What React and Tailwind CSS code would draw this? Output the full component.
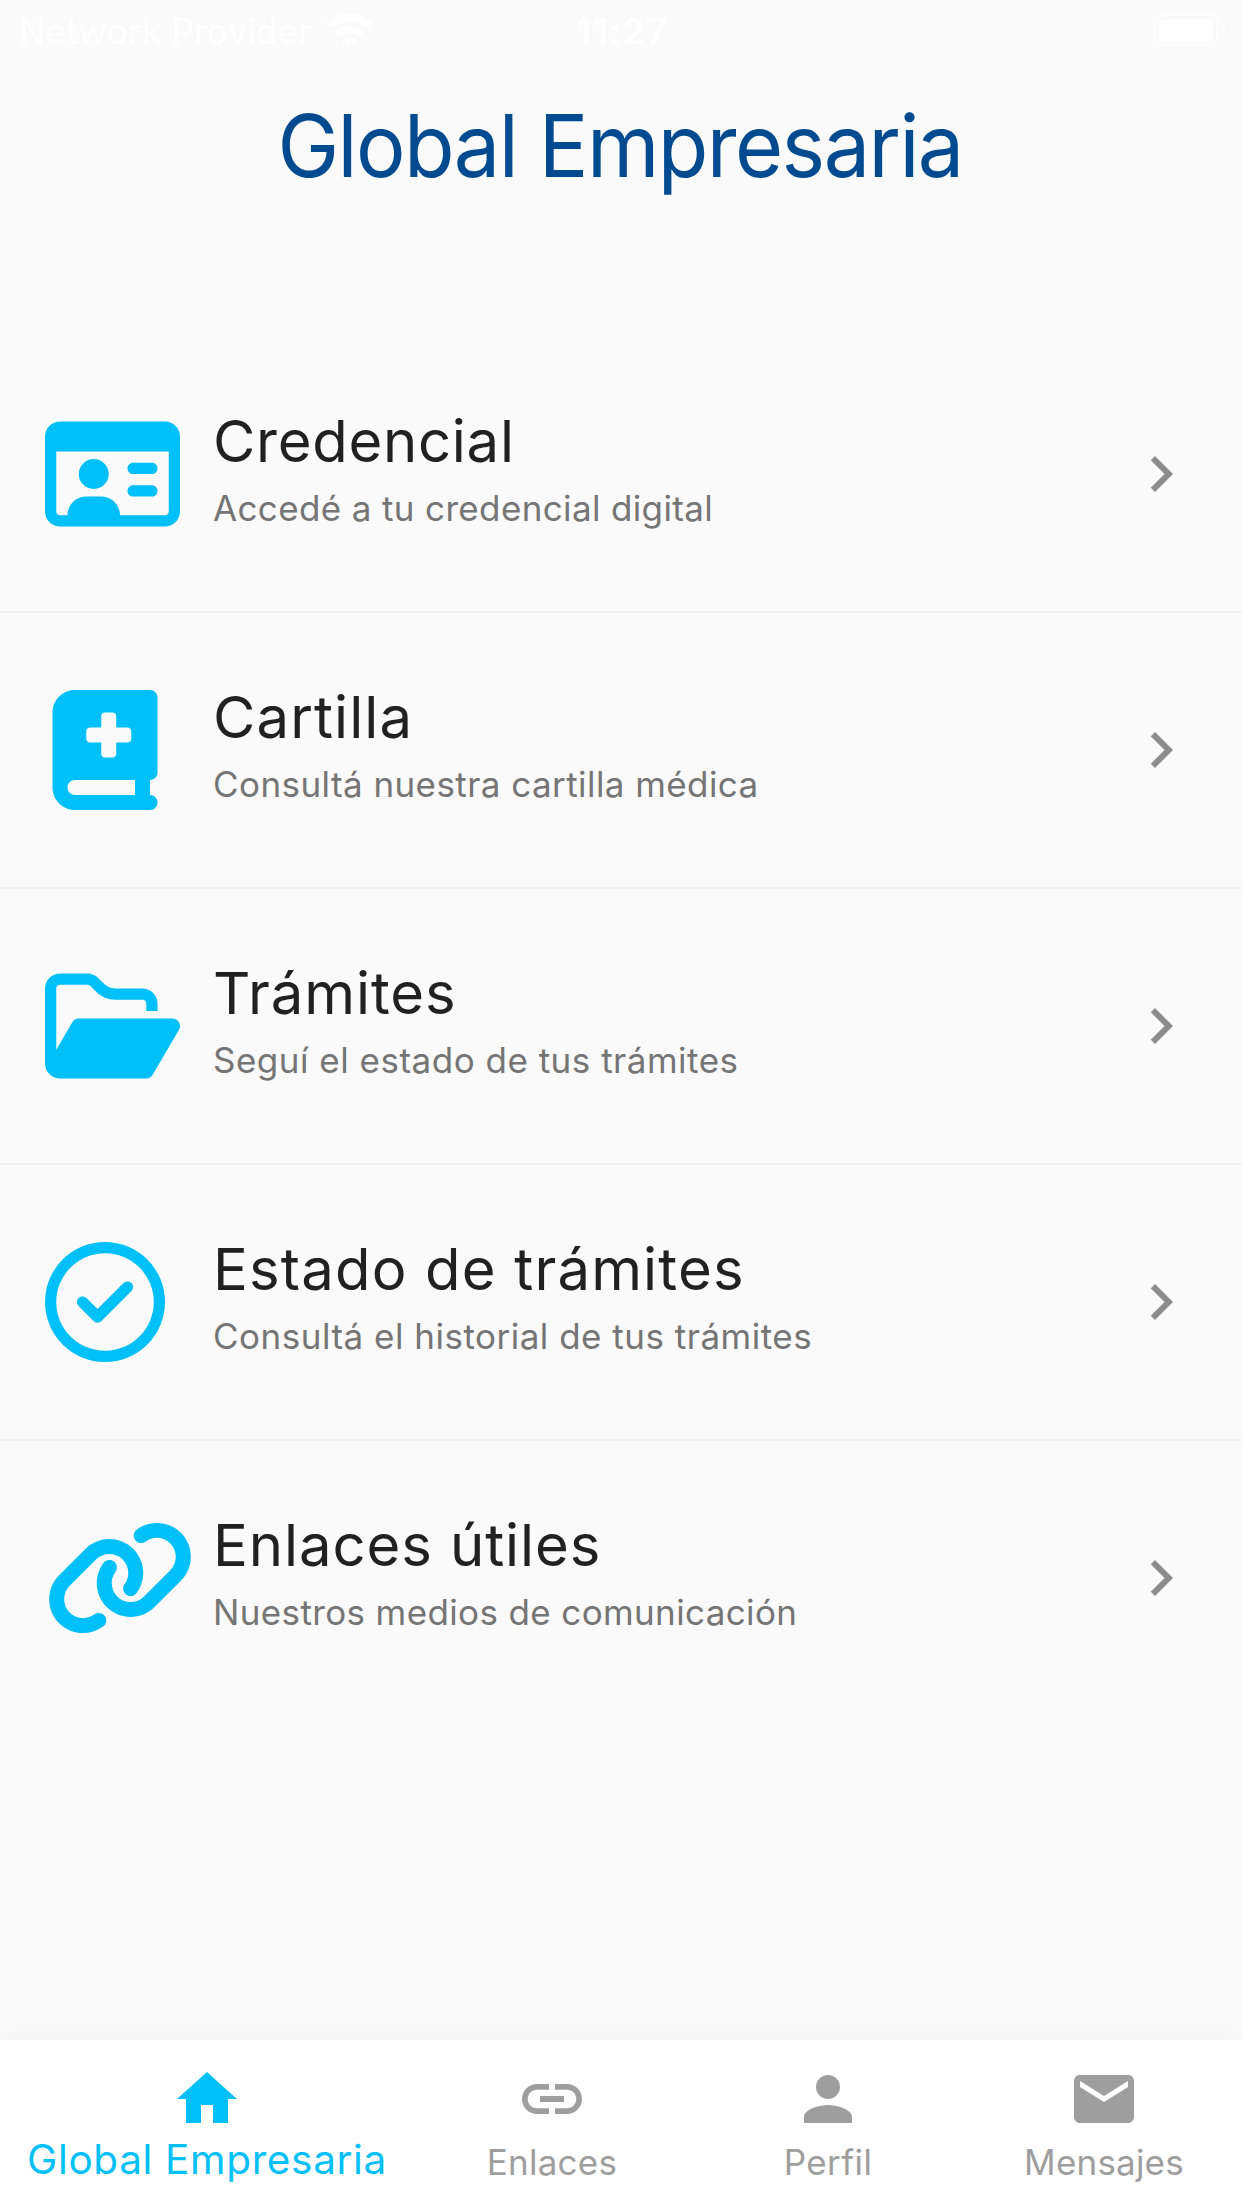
import { FaRegIdCard, FaBookMedical, FaRegFolderOpen, FaRegCircleCheck, FaLink } from "react-icons/fa6";
import { MdChevronRight, MdHome, MdLink, MdPerson, MdEmail } from "react-icons/md";

const rows = [
  { icon: FaRegIdCard, width: "w-[135px]", title: "Credencial", titleSpacing: "tracking-[0.72px]", text: "Accedé a tu credencial digital", textSpacing: "tracking-[0.36px]" },
  { icon: FaBookMedical, width: "w-[120px]", title: "Cartilla", titleSpacing: "tracking-[1.1px]", text: "Consultá nuestra cartilla médica", textSpacing: "tracking-[0.43px]" },
  { icon: FaRegFolderOpen, width: "w-[135px]", title: "Trámites", titleSpacing: "tracking-[0.9px]", text: "Seguí el estado de tus trámites", textSpacing: "tracking-[0.5px]" },
  { icon: FaRegCircleCheck, width: "w-[120px]", title: "Estado de trámites", titleSpacing: "tracking-[1.17px]", text: "Consultá el historial de tus trámites", textSpacing: "tracking-[0.5px]" },
  { icon: FaLink, width: "w-[150px]", title: "Enlaces útiles", titleSpacing: "tracking-[0.92px]", text: "Nuestros medios de comunicación", textSpacing: "tracking-[0.37px]" },
];

const tabs = [
  { icon: MdLink, label: "Enlaces", spacing: "tracking-[0.26px]" },
  { icon: MdPerson, label: "Perfil", spacing: "tracking-[0.41px]" },
  { icon: MdEmail, label: "Mensajes", spacing: "tracking-[0.2px]" },
];

function WifiIcon() {
  return (
    <svg viewBox="0 0 46 34" className="ml-[14px] h-[34px] w-[46px]" fill="none" stroke="currentColor">
      <path d="M2.5 12.1A29.5 29.5 0 0 1 43.5 12.1" strokeWidth="7.5" />
      <path d="M10.6 20.5A17.8 17.8 0 0 1 35.4 20.5" strokeWidth="7.6" />
      <path d="M23 33.3L16 26.2A10 10 0 0 1 30 26.2Z" fill="currentColor" stroke="none" />
    </svg>
  );
}

function BatteryIcon() {
  return (
    <svg viewBox="0 0 73 34" className="h-[34px] w-[73px]" fill="currentColor">
      <rect x="1.5" y="1.8" width="63" height="30" rx="8" fill="none" stroke="currentColor" strokeWidth="3" opacity="0.4" />
      <rect x="6" y="6" width="54" height="22" rx="4" />
      <path d="M69 11.5C71 12.3 72.3 14.3 72.3 16.8S71 21.3 69 22.1Z" opacity="0.45" />
    </svg>
  );
}

function StatusBar() {
  return (
    <header className="grid h-[60px] grid-cols-3 items-start pt-[11px] pr-[16px] pl-[19px] text-[35px] leading-[40px] text-white">
      <div className="flex items-center">
        <span className="tracking-[0.24px] whitespace-nowrap">Network Provider</span>
        <WifiIcon />
      </div>
      <span className="text-center font-semibold tracking-[1.9px]">11:27</span>
      <div className="flex justify-end pt-[2px]">
        <BatteryIcon />
      </div>
    </header>
  );
}

function MenuRow({ icon: Icon, width, title, titleSpacing, text, textSpacing, last }) {
  return (
    <li className={`flex h-[276px] items-center border-b-2 pr-[45px] pl-[45px] ${last ? "border-transparent" : "border-[#f1f1f1]"}`}>
      <div className="flex w-[135px] shrink-0">
        <div className="flex min-w-[120px] shrink-0 justify-center">
          <Icon className={`h-[120px] shrink-0 text-[#00c0fa] ${width}`} />
        </div>
      </div>
      <div className="ml-[33px] flex-1 pb-3">
        <h2 className={`text-[58px] leading-[70px] text-[#212121] ${titleSpacing}`}>{title}</h2>
        <p className={`mt-[10px] text-[35px] leading-[44px] text-[#757575] ${textSpacing}`}>{text}</p>
      </div>
      <MdChevronRight className="size-[72px] text-[#8c8c8c]" />
    </li>
  );
}

export default function App() {
  return (
    <div className="flex h-[2208px] w-[1242px] flex-col overflow-hidden bg-[#fafafa] font-['Inter',sans-serif]">
      <StatusBar />
      <h1 className="mt-[36px] scale-x-95 pr-[2px] text-center text-[87px] leading-[100px] tracking-[-1.64px] text-[#004a90]">Global Empresaria</h1>
      <ul className="mt-[141px] flex-1">
        {rows.map((row, i) => (
          <MenuRow key={row.title} {...row} last={i === rows.length - 1} />
        ))}
      </ul>
      <nav className="flex h-[168px] shrink-0 bg-white text-[#9e9e9e] shadow-[0_0_24px_rgba(0,0,0,0.04)]">
        <div className="flex w-[414px] flex-col items-center pt-[23px] text-[#00c0fa]">
          <MdHome className="size-[72px]" />
          <span className="mt-px text-[40.5px] leading-[48px] tracking-[0.65px]">Global Empresaria</span>
        </div>
        {tabs.map(({ icon: Icon, label, spacing }) => (
          <div key={label} className="flex w-[276px] flex-col items-center pt-[23px]">
            <Icon className="size-[72px]" />
            <span className={`mt-[3px] text-[35px] leading-[48px] ${spacing}`}>{label}</span>
          </div>
        ))}
      </nav>
    </div>
  );
}
